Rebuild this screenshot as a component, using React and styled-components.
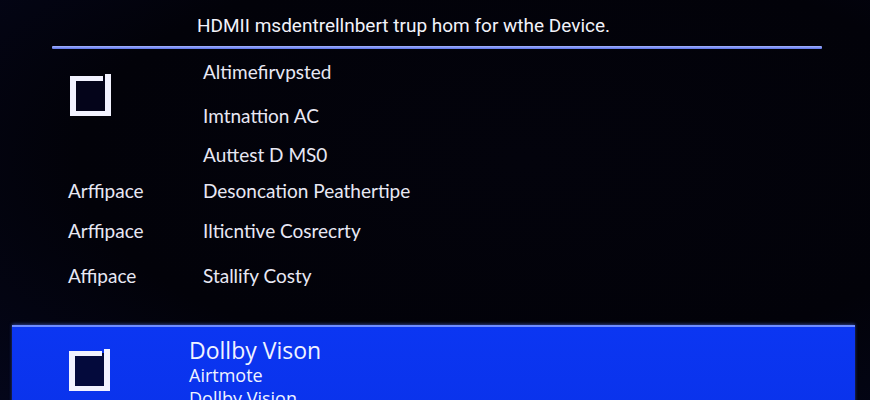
import React from "react";
import styled, { createGlobalStyle } from "styled-components";

const GlobalStyle = createGlobalStyle`
  html, body {
    margin: 0;
    padding: 0;
    background: #02020a;
  }
`;

const Screen = styled.div`
  width: 870px;
  height: 400px;
  overflow: hidden;
  background: radial-gradient(ellipse at 60% 40%, #03030c 0%, #020209 60%, #04061a 100%);
  color: #e6e6f2;
  font-family: Lato, "Noto Sans", sans-serif;
  display: flex;
  flex-direction: column;
  & > * {
    flex-shrink: 0;
  }
`;

const Header = styled.div`
  padding: 14px 0 0 197px;
  height: 34px;
  box-sizing: border-box;
  font-family: Roboto, "Liberation Sans", sans-serif;
  font-size: 19px;
  color: #f2f2fa;
`;

const Divider = styled.div`
  height: 3px;
  margin: 12px 48px 0 52px;
  background: linear-gradient(#a5b4ff, #5b72e8);
  border-radius: 1px;
`;

const Grid = styled.div`
  display: grid;
  grid-template-columns: 203px 1fr;
  grid-template-rows: 45px 43px 35px 36px 45px 45px;
`;

const Cell = styled.div`
  display: flex;
  align-items: center;
  font-size: 19px;
  color: #e8e8f4;
  padding-left: ${(p) => p.$indent || 0}px;
  grid-column: ${(p) => p.$col};
  grid-row: ${(p) => p.$row};
`;

const BoxSlot = styled.div`
  grid-column: 1;
  grid-row: 1 / span 2;
  display: flex;
  align-items: center;
  padding: 4px 0 0 70px;
`;

const Selected = styled.div`
  margin: 27px 15px 0 12px;
  height: 80px;
  display: flex;
  background: linear-gradient(#0b36f2, #0a33ec);
  border-top: 2px solid #6f8dff;
  box-shadow: 0 -1px 3px rgba(80, 120, 255, 0.5);
`;

const SelectedBox = styled.div`
  width: 177px;
  padding: 22px 0 0 57px;
  box-sizing: border-box;
`;

const SelectedText = styled.div`
  display: flex;
  flex-direction: column;
  padding-top: 10px;
  color: #f0f3ff;
  font-family: "Open Sans", "Noto Sans", sans-serif;
`;

const Title = styled.div`
  font-size: 23px;
  line-height: 27px;
`;

const Sub = styled.div`
  font-size: 18px;
  line-height: 23px;
`;

function CheckBox({ fill }) {
  return (
    <svg width="42" height="42" viewBox="0 0 42 42">
      <rect x="3" y="4" width="35" height="35" fill={fill} />
      <rect x="0" y="2" width="33" height="5" fill="#f2f2ff" />
      <rect x="0" y="2" width="6" height="40" fill="#f2f2ff" />
      <rect x="0" y="37" width="41" height="5" fill="#f2f2ff" />
      <rect x="35" y="0" width="6" height="42" fill="#f2f2ff" />
    </svg>
  );
}

const rows = [
  { row: 1, right: "Altimefirvpsted" },
  { row: 2, right: "Imtnattion AC" },
  { row: 3, right: "Auttest D MS0" },
  { row: 4, left: "Arffipace", right: "Desoncation Peathertipe" },
  { row: 5, left: "Arffipace", right: "Ilticntive Cosrecrty" },
  { row: 6, left: "Affipace", right: "Stallify Costy" },
];

export default function App() {
  return (
    <>
      <GlobalStyle />
      <Screen>
        <Header>HDMII msdentrellnbert trup hom for wthe Device.</Header>
        <Divider />
        <Grid>
          <BoxSlot>
            <CheckBox fill="#04041a" />
          </BoxSlot>
          {rows.map((r) => (
            <React.Fragment key={r.row}>
              {r.left && (
                <Cell $col={1} $row={r.row} $indent={68}>
                  {r.left}
                </Cell>
              )}
              <Cell $col={2} $row={r.row}>
                {r.right}
              </Cell>
            </React.Fragment>
          ))}
        </Grid>
        <Selected>
          <SelectedBox>
            <CheckBox fill="#040a3c" />
          </SelectedBox>
          <SelectedText>
            <Title>Dollby Vison</Title>
            <Sub>Airtmote</Sub>
            <Sub>Dollby Vision</Sub>
          </SelectedText>
        </Selected>
      </Screen>
    </>
  );
}
